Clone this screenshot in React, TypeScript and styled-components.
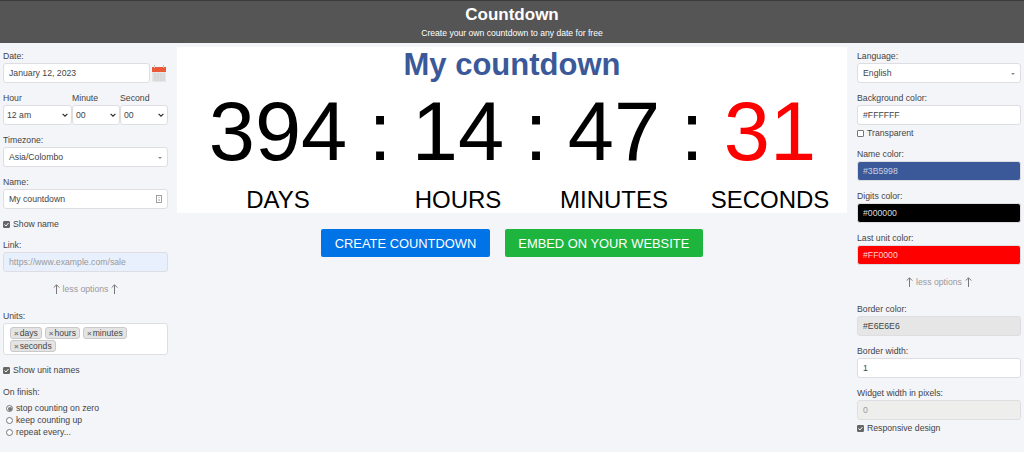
import React from 'react';
import styled, { createGlobalStyle } from 'styled-components';

const GlobalStyle = createGlobalStyle`
  html, body {
    margin: 0;
    padding: 0;
    background: #f4f5f9;
    font-family: "Liberation Sans", Arial, sans-serif;
    overflow: hidden;
  }
  * { box-sizing: border-box; }
`;

const Page = styled.div`
  width: 1024px;
  height: 452px;
  overflow: hidden;
`;

const Header = styled.header`
  height: 43px;
  background: #555;
  border-top: 1px solid #3c3c3c;
  color: #fff;
  text-align: center;
`;

const Title = styled.h1`
  margin: 0;
  padding-top: 4px;
  font-size: 17px;
  line-height: 19px;
  font-weight: 700;
`;

const Tagline = styled.p`
  margin: 4px 0 0;
  font-size: 8.6px;
  line-height: 11px;
`;

const Columns = styled.div`
  display: flex;
  align-items: flex-start;
`;

const Sidebar = styled.aside`
  width: 177px;
  padding: 7px 9px 0 3px;
  flex: none;
`;

const RightSidebar = styled.aside`
  width: 177px;
  padding: 7px 3px 0 10px;
  flex: none;
`;

const Main = styled.main`
  width: 670px;
  padding-top: 4px;
  flex: none;
`;

const Field = styled.div<{ $gap?: number }>`
  margin-bottom: ${(p) => p.$gap ?? 9}px;
`;

const Label = styled.label`
  display: block;
  padding-top: 1px;
  font-size: 8.7px;
  line-height: 11px;
  color: #444;
  margin-bottom: 1px;
`;

const Control = styled.div<{ $bg?: string; $color?: string; $tight?: boolean }>`
  height: 20px;
  display: flex;
  align-items: center;
  justify-content: space-between;
  padding: 0 ${(p) => (p.$tight ? '3px' : '5px')};
  font-size: 8.7px;
  border: 1px solid #dedee2;
  border-radius: 3px;
  background: ${(p) => p.$bg ?? '#fff'};
  color: ${(p) => p.$color ?? '#444'};
`;

const DateRow = styled.div`
  display: flex;
  align-items: center;
  gap: 2px;
  padding-right: 2px;
`;

const DateControl = styled(Control)`
  flex: 1;
`;

const TimeGrid = styled.div`
  display: grid;
  grid-template-columns: 69px 48px 48px;
`;

const TimeCell = styled.div`
  min-width: 0;
`;

const CaretDown = styled.span`
  width: 0;
  height: 0;
  margin-top: 1px;
  border-left: 2px solid transparent;
  border-right: 2px solid transparent;
  border-top: 2px solid #888;
`;

const CheckRow = styled.div<{ $gap?: number }>`
  display: flex;
  align-items: center;
  gap: 3px;
  font-size: 8.7px;
  line-height: 11px;
  color: #444;
  margin-bottom: ${(p) => p.$gap ?? 0}px;
`;

const Box = styled.span<{ $checked?: boolean }>`
  width: 7px;
  height: 7px;
  flex: none;
  border-radius: 1px;
  display: inline-flex;
  align-items: center;
  justify-content: center;
  background: ${(p) => (p.$checked ? '#666' : '#fff')};
  border: 1px solid ${(p) => (p.$checked ? '#666' : '#777')};
`;

const Radio = styled.span<{ $checked?: boolean }>`
  width: 7px;
  height: 7px;
  flex: none;
  border-radius: 50%;
  background: #fff;
  border: 1px solid #777;
  display: inline-flex;
  align-items: center;
  justify-content: center;
  &::after {
    content: '';
    display: ${(p) => (p.$checked ? 'block' : 'none')};
    width: 4px;
    height: 4px;
    border-radius: 50%;
    background: #777;
  }
`;

const RadioList = styled.div`
  padding-left: 3px;
  display: flex;
  flex-direction: column;
  gap: 1px;
`;

const LessOptions = styled.div`
  display: flex;
  align-items: center;
  justify-content: center;
  gap: 3px;
  height: 14px;
  margin: 10px 0 14px;
  font-size: 8.7px;
  color: #999;
`;

const UnitsBox = styled.div`
  height: 32px;
  padding: 3px 6px 0;
  background: #fff;
  border: 1px solid #dedee2;
  border-radius: 3px;
  display: flex;
  flex-wrap: wrap;
  align-content: flex-start;
  gap: 1px 3px;
`;

const Tag = styled.span`
  height: 12px;
  padding: 0 3px;
  display: inline-flex;
  align-items: center;
  gap: 1px;
  font-size: 8.6px;
  color: #444;
  background: #e4e4e4;
  border: 1px solid #c9c9c9;
  border-radius: 3px;
`;

const TagX = styled.span`
  font-size: 8px;
  font-weight: 700;
  color: #777;
`;

const Card = styled.section`
  height: 166px;
  background: #fff;
  text-align: center;
  overflow: hidden;
`;

const CountdownName = styled.h2`
  margin: 0;
  font-size: 31px;
  line-height: 35px;
  font-weight: 700;
  color: #3b5998;
`;

const DigitGrid = styled.div`
  display: flex;
  justify-content: center;
`;

const Unit = styled.div<{ $width: number }>`
  width: ${(p) => p.$width}px;
  flex: none;
`;

const Digits = styled.div<{ $color?: string }>`
  font-size: 83px;
  line-height: 100px;
  color: ${(p) => p.$color ?? '#000'};
`;

const UnitName = styled.div`
  margin-top: 4px;
  font-size: 24px;
  line-height: 28px;
  color: #000;
`;

const Sep = styled.div`
  width: 28px;
  flex: none;
  font-size: 83px;
  line-height: 100px;
  color: #000;
  text-align: center;
`;

const Actions = styled.div`
  display: flex;
  justify-content: center;
  gap: 15px;
  margin-top: 16px;
`;

const ActionButton = styled.button<{ $bg: string }>`
  height: 28px;
  padding: 0 13.5px;
  border: 0;
  border-radius: 2px;
  background: ${(p) => p.$bg};
  color: #fff;
  font-family: inherit;
  font-size: 12.9px;
`;

const Arrow = () => (
  <svg width="7" height="10" viewBox="0 0 7 10" fill="none" stroke="#777" strokeWidth="1">
    <path d="M3.5 10V1M0.7 3.6L3.5 .8l2.8 2.8" />
  </svg>
);

const Tick = () => (
  <svg width="5" height="5" viewBox="0 0 5 5" fill="none" stroke="#fff" strokeWidth="1">
    <path d="M0.5 2.5l1.4 1.5L4.5 1" />
  </svg>
);

const Chevron = () => (
  <svg width="6" height="4" viewBox="0 0 6 4" fill="none" stroke="#333" strokeWidth="1.2">
    <path d="M.6 .8L3 3.2 5.4 .8" />
  </svg>
);

const Calendar = () => (
  <svg width="14" height="17" viewBox="0 0 14 17">
    <rect x="0" y="2" width="14" height="15" fill="#e6e6e6" />
    <rect x="0" y="2" width="14" height="5" fill="#ea5a38" />
    <rect x="2" y="0" width="1" height="3" fill="#c4c4c4" />
    <rect x="11" y="0" width="1" height="3" fill="#c4c4c4" />
    <path d="M1 9h12M1 11h12M1 13h12M1 15h12M3 8v8M6 8v8M9 8v8M12 8v8" stroke="#cfcfcf" strokeWidth="0.7" />
  </svg>
);

const TextIcon = () => (
  <svg width="6" height="8" viewBox="0 0 6 8" fill="none" stroke="#888" strokeWidth="0.8">
    <rect x="0.5" y="0.5" width="5" height="7" />
    <path d="M3 2v1M3 4v2" />
  </svg>
);

const UNITS = ['days', 'hours', 'minutes', 'seconds'];

const App = (): JSX.Element => {
  return (
    <Page>
      <GlobalStyle />
      <Header>
        <Title>Countdown</Title>
        <Tagline>Create your own countdown to any date for free</Tagline>
      </Header>
      <Columns>
        <Sidebar>
          <Field>
            <Label>Date:</Label>
            <DateRow>
              <DateControl>January 12, 2023</DateControl>
              <Calendar />
            </DateRow>
          </Field>
          <Field>
            <TimeGrid>
              <TimeCell>
                <Label>Hour</Label>
                <Control $tight>12 am<Chevron /></Control>
              </TimeCell>
              <TimeCell>
                <Label>Minute</Label>
                <Control $tight>00<Chevron /></Control>
              </TimeCell>
              <TimeCell>
                <Label>Second</Label>
                <Control $tight>00<Chevron /></Control>
              </TimeCell>
            </TimeGrid>
          </Field>
          <Field>
            <Label>Timezone:</Label>
            <Control>Asia/Colombo<CaretDown /></Control>
          </Field>
          <Field $gap={10}>
            <Label>Name:</Label>
            <Control>My countdown<TextIcon /></Control>
          </Field>
          <CheckRow $gap={9}><Box $checked><Tick /></Box>Show name</CheckRow>
          <Field $gap={0}>
            <Label>Link:</Label>
            <Control $bg="#e8f0fe" $color="#999">https://www.example.com/sale</Control>
          </Field>
          <LessOptions><Arrow />less options<Arrow /></LessOptions>
          <Field $gap={10}>
            <Label>Units:</Label>
            <UnitsBox>
              {UNITS.map((u) => (
                <Tag key={u}><TagX>×</TagX>{u}</Tag>
              ))}
            </UnitsBox>
          </Field>
          <CheckRow $gap={10}><Box $checked><Tick /></Box>Show unit names</CheckRow>
          <Field $gap={5}>
            <Label>On finish:</Label>
          </Field>
          <RadioList>
            <CheckRow><Radio $checked />stop counting on zero</CheckRow>
            <CheckRow><Radio />keep counting up</CheckRow>
            <CheckRow><Radio />repeat every...</CheckRow>
          </RadioList>
        </Sidebar>
        <Main>
          <Card>
            <CountdownName>My countdown</CountdownName>
            <DigitGrid>
              <Unit $width={176}>
                <Digits>394</Digits>
                <UnitName>DAYS</UnitName>
              </Unit>
              <Sep>:</Sep>
              <Unit $width={128}>
                <Digits>14</Digits>
                <UnitName>HOURS</UnitName>
              </Unit>
              <Sep>:</Sep>
              <Unit $width={128}>
                <Digits>47</Digits>
                <UnitName>MINUTES</UnitName>
              </Unit>
              <Sep>:</Sep>
              <Unit $width={128}>
                <Digits $color="#f00">31</Digits>
                <UnitName>SECONDS</UnitName>
              </Unit>
            </DigitGrid>
          </Card>
          <Actions>
            <ActionButton $bg="#0073e6">CREATE COUNTDOWN</ActionButton>
            <ActionButton $bg="#1eb53f">EMBED ON YOUR WEBSITE</ActionButton>
          </Actions>
        </Main>
        <RightSidebar>
          <Field>
            <Label>Language:</Label>
            <Control>English<CaretDown /></Control>
          </Field>
          <Field $gap={3}>
            <Label>Background color:</Label>
            <Control>#FFFFFF</Control>
          </Field>
          <CheckRow $gap={9}><Box />Transparent</CheckRow>
          <Field>
            <Label>Name color:</Label>
            <Control $bg="#3b5998" $color="#c8d0e2">#3B5998</Control>
          </Field>
          <Field>
            <Label>Digits color:</Label>
            <Control $bg="#000" $color="#ddd">#000000</Control>
          </Field>
          <Field $gap={0}>
            <Label>Last unit color:</Label>
            <Control $bg="#f00" $color="#ffd0d0">#FF0000</Control>
          </Field>
          <LessOptions><Arrow />less options<Arrow /></LessOptions>
          <Field>
            <Label>Border color:</Label>
            <Control $bg="#e6e6e6">#E6E6E6</Control>
          </Field>
          <Field>
            <Label>Border width:</Label>
            <Control>1</Control>
          </Field>
          <Field $gap={3}>
            <Label>Widget width in pixels:</Label>
            <Control $bg="#eeeeec" $color="#999">0</Control>
          </Field>
          <CheckRow><Box $checked><Tick /></Box>Responsive design</CheckRow>
        </RightSidebar>
      </Columns>
    </Page>
  );
};

export default App;
